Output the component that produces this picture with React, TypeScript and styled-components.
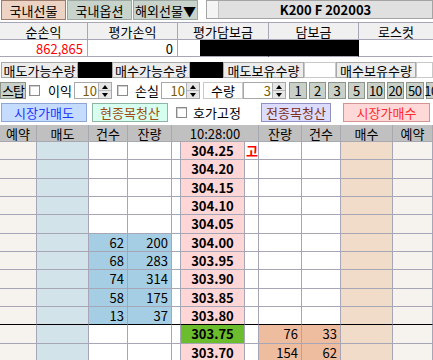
import React from 'react';
import styled, { createGlobalStyle } from 'styled-components';

const Global = createGlobalStyle`
  html, body { margin: 0; padding: 0; background: #ffffff; }
  body {
    font-family: "Noto Sans CJK KR", "Noto Sans", sans-serif;
    font-size: 13px;
    color: #000;
  }
  * { box-sizing: border-box; }
`;

const Screen = styled.div`
  width: 433px;
  height: 360px;
  overflow: hidden;
  display: flex;
  flex-direction: column;
`;

/* ---------- top bar ---------- */
const TopBar = styled.div`
  display: flex;
  align-items: flex-start;
  height: 21px;
  gap: 1px;
  padding-left: 1px;
`;

const Tab = styled.div<{ $active?: boolean }>`
  width: 65px;
  height: 20px;
  flex-shrink: 0;
  display: flex;
  align-items: center;
  justify-content: center;
  font-size: 13px;
  line-height: 1;
  background: ${p => (p.$active ? '#ecd3c3' : '#c8d3cc')};
  border: 1px solid ${p => (p.$active ? '#9c7c6c' : '#9ea8a2')};
`;

const TitleBox = styled.div`
  flex: 1;
  margin-left: 7px;
  height: 19px;
  display: flex;
  border: 1px solid #a4a4a4;
  background: #e0e0e0;
`;

const TitleStub = styled.div`
  width: 12px;
  background: #f4f4f4;
  border-right: 1px solid #c0c0c0;
`;

const TitleText = styled.div`
  flex: 1;
  display: flex;
  align-items: center;
  justify-content: center;
  font-weight: bold;
  font-size: 13px;
  line-height: 1;
`;

/* ---------- summary table ---------- */
const Summary = styled.div`
  margin-top: 2px;
  display: grid;
  grid-template-columns: 88px 90px 91px 90px 74px;
  grid-template-rows: 17px 17px;
  border-top: 1px solid #a6a6b6;
`;

const SumHead = styled.div<{ $last?: boolean }>`
  background: #f0f0f0;
  border-right: ${p => (p.$last ? 'none' : '1px solid #a6a6b6')};
  border-bottom: 1px solid #a6a6b6;
  display: flex;
  align-items: center;
  justify-content: center;
  line-height: 1;
  white-space: nowrap;
`;

const SumValue = styled.div<{ $color?: string; $black?: boolean; $edge?: string }>`
  border-right: 1px solid ${p => p.$edge || '#a6a6b6'};
  border-bottom: 1px solid #a6a6b6;
  background: ${p => (p.$black ? '#000' : '#fff')};
  color: ${p => p.$color || '#000'};
  display: flex;
  align-items: center;
  justify-content: flex-end;
  padding-right: 4px;
  line-height: 1;
`;

const BlackFill = styled.div`
  width: 69px;
  height: 100%;
  margin-right: -5px;
  background: #000;
`;

/* ---------- quantity bar ---------- */
const QtyBar = styled.div`
  margin-top: 5px;
  height: 16px;
  display: flex;
  padding-left: 1px;
`;

const QtyLabel = styled.div<{ $w: number }>`
  width: ${p => p.$w}px;
  height: 16px;
  flex-shrink: 0;
  background: #ececec;
  border: 1px solid #a8a8a8;
  display: flex;
  align-items: center;
  justify-content: center;
  line-height: 1;
  white-space: nowrap;
`;

const QtyBox = styled.div<{ $w: number; $black?: boolean }>`
  width: ${p => p.$w}px;
  height: 16px;
  flex-shrink: 0;
  background: ${p => (p.$black ? '#000' : '#fff')};
  border: 1px solid ${p => (p.$black ? '#000' : '#c8c8c8')};
`;

/* ---------- stop bar ---------- */
const StopBar = styled.div`
  margin-top: 4px;
  height: 17px;
  display: flex;
  align-items: center;
  & > * { flex-shrink: 0; }
`;

const StopBtn = styled.div`
  width: 26px;
  height: 17px;
  background: #c8d0c8;
  border: 1px solid #8c948c;
  display: flex;
  align-items: center;
  justify-content: center;
  line-height: 1;
  font-size: 13px;
  letter-spacing: -1px;
  white-space: nowrap;
`;

const Check = styled.div<{ $ml: number }>`
  width: 11px;
  height: 11px;
  flex-shrink: 0;
  margin-left: ${p => p.$ml}px;
  background: #fff;
  border: 1px solid #8a8a8a;
  box-shadow: inset 1px 1px 0 #d0d0d0;
`;

const Caption = styled.span<{ $ml: number; $w: number }>`
  margin-left: ${p => p.$ml}px;
  width: ${p => p.$w}px;
  flex-shrink: 0;
  font-size: 13px;
  line-height: 17px;
  white-space: nowrap;
`;

const Spin = styled.div<{ $w: number; $ml: number }>`
  width: ${p => p.$w}px;
  height: 17px;
  margin-left: ${p => p.$ml}px;
  display: flex;
  background: #fff;
  border: 1px solid #a8a8a8;
`;

const SpinValue = styled.div`
  flex: 1;
  display: flex;
  align-items: center;
  justify-content: flex-end;
  padding-right: 1px;
  color: #7a5c00;
  font-size: 13px;
  line-height: 1;
`;

const SpinArrows = styled.div`
  width: 13px;
  display: flex;
  flex-direction: column;
  border-left: 1px solid #b0b0b0;
`;

const Arrow = styled.div<{ $down?: boolean }>`
  flex: 1;
  background: #e6e6e6;
  display: flex;
  align-items: center;
  justify-content: center;
  border-top: ${p => (p.$down ? '1px solid #b8b8b8' : 'none')};
  &::after {
    content: '';
    width: 0;
    height: 0;
    border-left: 3.5px solid transparent;
    border-right: 3.5px solid transparent;
    ${p => (p.$down ? 'border-top: 4px solid #000;' : 'border-bottom: 4px solid #000;')}
  }
`;

const FieldLabel = styled.div<{ $w: number; $ml: number }>`
  width: ${p => p.$w}px;
  height: 17px;
  margin-left: ${p => p.$ml}px;
  background: #fff;
  border: 1px solid #c8c8c8;
  display: flex;
  align-items: center;
  justify-content: center;
  font-size: 13px;
  line-height: 1;
  white-space: nowrap;
`;

const NumBtns = styled.div`
  margin-left: 3px;
  display: flex;
  gap: 2px;
`;

const NumBtn = styled.div`
  width: 17.5px;
  height: 17px;
  flex-shrink: 0;
  background: #c8d0c8;
  border: 1px solid #8c948c;
  display: flex;
  align-items: center;
  justify-content: center;
  font-size: 13px;
  line-height: 1;
  letter-spacing: -0.5px;
`;

/* ---------- action bar ---------- */
const ActionBar = styled.div`
  margin-top: 4px;
  height: 19px;
  display: flex;
  align-items: center;
  & > * { flex-shrink: 0; }
`;

const ActionBtn = styled.div<{ $w: number; $ml: number; $bg: string; $bd: string; $fg: string }>`
  width: ${p => p.$w}px;
  height: 19px;
  margin-left: ${p => p.$ml}px;
  background: ${p => p.$bg};
  border: 1px solid ${p => p.$bd};
  color: ${p => p.$fg};
  display: flex;
  align-items: center;
  justify-content: center;
  font-size: 13px;
  line-height: 1;
  white-space: nowrap;
`;

/* ---------- order book ---------- */
const GRID = '#a6a6b6';

const Book = styled.div`
  margin-top: 3px;
  display: grid;
  grid-template-columns: 37px 52px 39px 44px 9px 64px 14px 43px 39px 52px 40px;
  grid-template-rows: 17px;
  grid-auto-rows: 18.33px;
`;

const HeadCell = styled.div<{ $span?: number }>`
  grid-column: span ${p => p.$span || 1};
  background: #c0c0c0;
  border-right: 1px solid #a8a8b0;
  border-bottom: 1px solid #a8a8b0;
  display: flex;
  align-items: center;
  justify-content: center;
  font-size: 13px;
  line-height: 1;
  white-space: nowrap;
`;

const Cell = styled.div<{ $bg: string; $align?: string; $bold?: boolean; $sep?: boolean; $color?: string }>`
  background: ${p => p.$bg};
  border-right: 1px solid ${GRID};
  border-bottom: 1px solid ${p => (p.$sep ? '#000' : GRID)};
  display: flex;
  align-items: center;
  justify-content: ${p => p.$align || 'flex-end'};
  padding: 0 ${p => (p.$align === 'flex-start' ? '1px' : '3px')};
  font-weight: ${p => (p.$bold ? 'bold' : 'normal')};
  color: ${p => p.$color || '#000'};
  font-size: 13px;
  line-height: 1;
  white-space: nowrap;
`;

type Row = {
  p: string;
  hi?: boolean;
  sc?: string;
  sq?: string;
  bq?: string;
  bc?: string;
  cur?: boolean;
  sep?: boolean;
};

const rows: Row[] = [
  { p: '304.25', hi: true },
  { p: '304.20' },
  { p: '304.15' },
  { p: '304.10' },
  { p: '304.05' },
  { p: '304.00', sc: '62', sq: '200' },
  { p: '303.95', sc: '68', sq: '283' },
  { p: '303.90', sc: '74', sq: '314' },
  { p: '303.85', sc: '58', sq: '175' },
  { p: '303.80', sc: '13', sq: '37', sep: true },
  { p: '303.75', bq: '76', bc: '33', cur: true },
  { p: '303.70', bq: '154', bc: '62' },
];

const C = {
  reserve: '#f6f3ef',
  sell: '#d2e3ea',
  sellFill: '#a5cde3',
  price: '#ffd6d6',
  cur: '#6cbd2e',
  buyFill: '#eebda0',
  buy: '#f0dcc8',
  white: '#ffffff',
};

const SpinInput = ({ w, ml, v }: { w: number; ml: number; v: string }) => (
  <Spin $w={w} $ml={ml}>
    <SpinValue>{v}</SpinValue>
    <SpinArrows>
      <Arrow />
      <Arrow $down />
    </SpinArrows>
  </Spin>
);

export default function App() {
  return (
    <>
      <Global />
      <Screen>
        <TopBar>
          <Tab $active>국내선물</Tab>
          <Tab>국내옵션</Tab>
          <Tab>해외선물▼</Tab>
          <TitleBox>
            <TitleStub />
            <TitleText>K200 F 202003</TitleText>
          </TitleBox>
        </TopBar>

        <Summary>
          <SumHead>순손익</SumHead>
          <SumHead>평가손익</SumHead>
          <SumHead>평가담보금</SumHead>
          <SumHead>담보금</SumHead>
          <SumHead $last>로스컷</SumHead>
          <SumValue $color="#ff0000">862,865</SumValue>
          <SumValue>0</SumValue>
          <SumValue $edge="#000">
            <BlackFill />
          </SumValue>
          <SumValue $black $edge="#000" />
          <SumValue $edge="transparent" />
        </Summary>

        <QtyBar>
          <QtyLabel $w={77}>매도가능수량</QtyLabel>
          <QtyBox $w={34} $black />
          <QtyLabel $w={78}>매수가능수량</QtyLabel>
          <QtyBox $w={33} $black />
          <QtyLabel $w={81}>매도보유수량</QtyLabel>
          <QtyBox $w={32} />
          <QtyLabel $w={80}>매수보유수량</QtyLabel>
          <QtyBox $w={17} />
        </QtyBar>

        <StopBar>
          <StopBtn>스탑</StopBtn>
          <Check $ml={3} />
          <Caption $ml={8} $w={22}>이익</Caption>
          <SpinInput w={38} ml={4} v="10" />
          <Check $ml={5} />
          <Caption $ml={7} $w={22}>손실</Caption>
          <SpinInput w={39} ml={4} v="10" />
          <FieldLabel $w={40} $ml={3}>수량</FieldLabel>
          <SpinInput w={43} ml={0} v="3" />
          <NumBtns>
            {['1', '2', '3', '5', '10', '20', '50', '100'].map(n => (
              <NumBtn key={n}>{n}</NumBtn>
            ))}
          </NumBtns>
        </StopBar>

        <ActionBar>
          <ActionBtn $w={86} $ml={1} $bg="#c6dcff" $bd="#8ea6d6" $fg="#1a36ff">시장가매도</ActionBtn>
          <ActionBtn $w={76} $ml={5} $bg="#d6fff0" $bd="#8eb4a4" $fg="#a04a14">현종목청산</ActionBtn>
          <Check $ml={8} />
          <Caption $ml={6} $w={48}>호가고정</Caption>
          <ActionBtn $w={70} $ml={20} $bg="#dcdcff" $bd="#9090c4" $fg="#80301e">전종목청산</ActionBtn>
          <ActionBtn $w={87} $ml={12} $bg="#ffd8d8" $bd="#d49494" $fg="#ff2a2a">시장가매수</ActionBtn>
        </ActionBar>

        <Book>
          <HeadCell>예약</HeadCell>
          <HeadCell>매도</HeadCell>
          <HeadCell>건수</HeadCell>
          <HeadCell>잔량</HeadCell>
          <HeadCell $span={3}>10:28:00</HeadCell>
          <HeadCell>잔량</HeadCell>
          <HeadCell>건수</HeadCell>
          <HeadCell>매수</HeadCell>
          <HeadCell>예약</HeadCell>

          {rows.map(r => (
            <React.Fragment key={r.p}>
              <Cell $bg={C.reserve} $sep={r.sep} />
              <Cell $bg={C.sell} $sep={r.sep} />
              <Cell $bg={r.sc ? C.sellFill : C.white} $sep={r.sep}>{r.sc}</Cell>
              <Cell $bg={r.sq ? C.sellFill : C.white} $sep={r.sep}>{r.sq}</Cell>
              <Cell $bg={C.white} $sep={r.sep} />
              <Cell $bg={r.cur ? C.cur : C.price} $align="center" $bold $sep={r.sep}>{r.p}</Cell>
              <Cell $bg={C.white} $align="flex-start" $bold $color="#ff0000" $sep={r.sep}>
                {r.hi ? '고' : ''}
              </Cell>
              <Cell $bg={r.bq ? C.buyFill : C.white} $sep={r.sep}>{r.bq}</Cell>
              <Cell $bg={r.bc ? C.buyFill : C.white} $sep={r.sep}>{r.bc}</Cell>
              <Cell $bg={C.buy} $sep={r.sep} />
              <Cell $bg={C.reserve} $sep={r.sep} />
            </React.Fragment>
          ))}
        </Book>
      </Screen>
    </>
  );
}
